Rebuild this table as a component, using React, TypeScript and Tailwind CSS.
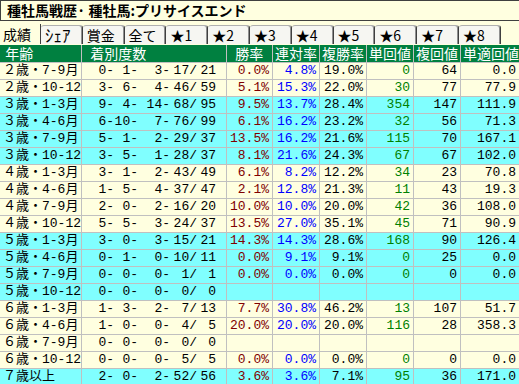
import React from "react";

type Row = {
  age: string;
  rec: [string, string, string, string, string];
  win: string;
  ren: string;
  fuku: string;
  tan: string;
  fk: string;
  tt: string;
  cyan: boolean;
};

const r = (
  age: string,
  rec: [string, string, string, string, string],
  vals: string[],
  cyan: boolean
): Row => ({
  age,
  rec,
  win: vals[0] ?? "",
  ren: vals[1] ?? "",
  fuku: vals[2] ?? "",
  tan: vals[3] ?? "",
  fk: vals[4] ?? "",
  tt: vals[5] ?? "",
  cyan,
});

const rows: Row[] = [
  r("２歳・7-9月", ["0-", "1-", "3-", "17/", "21"], ["0.0%", "4.8%", "19.0%", "0", "64", "0.0"], false),
  r("２歳・10-12", ["3-", "6-", "4-", "46/", "59"], ["5.1%", "15.3%", "22.0%", "30", "77", "77.9"], false),
  r("３歳・1-3月", ["9-", "4-", "14-", "68/", "95"], ["9.5%", "13.7%", "28.4%", "354", "147", "111.9"], true),
  r("３歳・4-6月", ["6-", "10-", "7-", "76/", "99"], ["6.1%", "16.2%", "23.2%", "32", "56", "71.3"], true),
  r("３歳・7-9月", ["5-", "1-", "2-", "29/", "37"], ["13.5%", "16.2%", "21.6%", "115", "70", "167.1"], true),
  r("３歳・10-12", ["3-", "5-", "1-", "28/", "37"], ["8.1%", "21.6%", "24.3%", "67", "67", "102.0"], true),
  r("４歳・1-3月", ["3-", "1-", "2-", "43/", "49"], ["6.1%", "8.2%", "12.2%", "34", "23", "70.8"], false),
  r("４歳・4-6月", ["1-", "5-", "4-", "37/", "47"], ["2.1%", "12.8%", "21.3%", "11", "43", "19.3"], false),
  r("４歳・7-9月", ["2-", "0-", "2-", "16/", "20"], ["10.0%", "10.0%", "20.0%", "42", "36", "108.0"], false),
  r("４歳・10-12", ["5-", "5-", "3-", "24/", "37"], ["13.5%", "27.0%", "35.1%", "45", "71", "90.9"], false),
  r("５歳・1-3月", ["3-", "0-", "3-", "15/", "21"], ["14.3%", "14.3%", "28.6%", "168", "90", "126.4"], true),
  r("５歳・4-6月", ["0-", "1-", "0-", "10/", "11"], ["0.0%", "9.1%", "9.1%", "0", "25", "0.0"], true),
  r("５歳・7-9月", ["0-", "0-", "0-", "1/", "1"], ["0.0%", "0.0%", "0.0%", "0", "0", "0.0"], true),
  r("５歳・10-12", ["0-", "0-", "0-", "0/", "0"], [], true),
  r("６歳・1-3月", ["1-", "3-", "2-", "7/", "13"], ["7.7%", "30.8%", "46.2%", "13", "107", "51.7"], false),
  r("６歳・4-6月", ["1-", "0-", "0-", "4/", "5"], ["20.0%", "20.0%", "20.0%", "116", "28", "358.3"], false),
  r("６歳・7-9月", ["0-", "0-", "0-", "0/", "0"], [], false),
  r("６歳・10-12", ["0-", "0-", "0-", "5/", "5"], ["0.0%", "0.0%", "0.0%", "0", "0", "0.0"], false),
  r("７歳以上", ["2-", "0-", "2-", "52/", "56"], ["3.6%", "3.6%", "7.1%", "95", "36", "171.0"], true),
];

const tabs = ["ｼｪｱ", "賞金", "全て", "★1", "★2", "★3", "★4", "★5", "★6", "★7", "★8"];

const grid =
  "grid grid-cols-[81px_144px_45px_46px_46px_46px_46px_59px] gap-x-px bg-[#c0c0c0] pb-px w-[520px]";

const recWidths = ["w-[32px]", "w-[24px]", "w-[32px]", "w-[27px]", "w-[19px]"];

export default function App() {
  return (
    <div className="w-[519px] h-[384px] overflow-hidden bg-[#ffffe0] font-['Noto_Sans_CJK_JP',sans-serif]">
      <div className="h-[21px] whitespace-nowrap border border-r-0 border-[#404040] bg-[#ffffe0] pl-[6px] text-[14px] font-bold leading-[19px] text-black">
        種牡馬戦歴· 種牡馬:プリサイスエンド
      </div>

      <div className="flex h-[23px] items-end">
        <div className="flex h-[20px] w-[41px] shrink-0 items-center whitespace-nowrap border-r border-[#404040] pl-[3px] text-[14px] text-black">
          成績
        </div>
        {tabs.map((t) => (
          <div
            key={t}
            className={`flex h-[19px] w-[41.8px] shrink-0 items-center whitespace-nowrap rounded-t-[3px] border-t border-r border-t-[#b0b0b0] border-r-[#404040] bg-[#f6f6f2] pl-[4px] text-black shadow-[inset_-1px_0_0_#909090] ${
              t === "ｼｪｱ" ? "text-[17px]" : "text-[14px]"
            }`}
          >
            {t}
          </div>
        ))}
      </div>

      <div className="mt-px">
        <div className={`${grid} h-[18px]`}>
          {[" 年齢", "  着別度数", "  勝率", "連対率", "複勝率", "単回値", "複回値", "単適回値"].map((h) => (
            <div
              key={h}
              className="whitespace-pre bg-[#008040] pl-[2px] text-[14px] leading-[17px] text-white"
            >
              {h}
            </div>
          ))}
        </div>

        {rows.map((row) => {
          const bg = row.cyan ? "bg-[#80ffff]" : "bg-[#ffffe0]";
          const cell = `${bg} whitespace-nowrap pr-[3px] text-right text-[13px] leading-[16px] font-['Liberation_Mono','Noto_Sans_CJK_JP',monospace]`;
          return (
            <div key={row.age} className={`${grid} h-[17px]`}>
              <div className={`${bg} whitespace-nowrap pl-[3px] text-[13px] leading-[16px] text-black font-['Liberation_Mono','Noto_Sans_CJK_JP',monospace]`}>
                {row.age}
              </div>
              <div className={`${bg} flex whitespace-nowrap text-[13px] leading-[16px] text-black font-['Liberation_Mono',monospace]`}>
                {row.rec.map((s, i) => (
                  <span key={i} className={`${recWidths[i]} shrink-0 text-right`}>
                    {s}
                  </span>
                ))}
              </div>
              <div className={`${cell} text-[#800000]`}>{row.win}</div>
              <div className={`${cell} text-[#0000ff]`}>{row.ren}</div>
              <div className={`${cell} text-black`}>{row.fuku}</div>
              <div className={`${cell} text-[#008000]`}>{row.tan}</div>
              <div className={`${cell} text-black`}>{row.fk}</div>
              <div className={`${cell} pr-[4px] text-black`}>{row.tt}</div>
            </div>
          );
        })}
      </div>
    </div>
  );
}
